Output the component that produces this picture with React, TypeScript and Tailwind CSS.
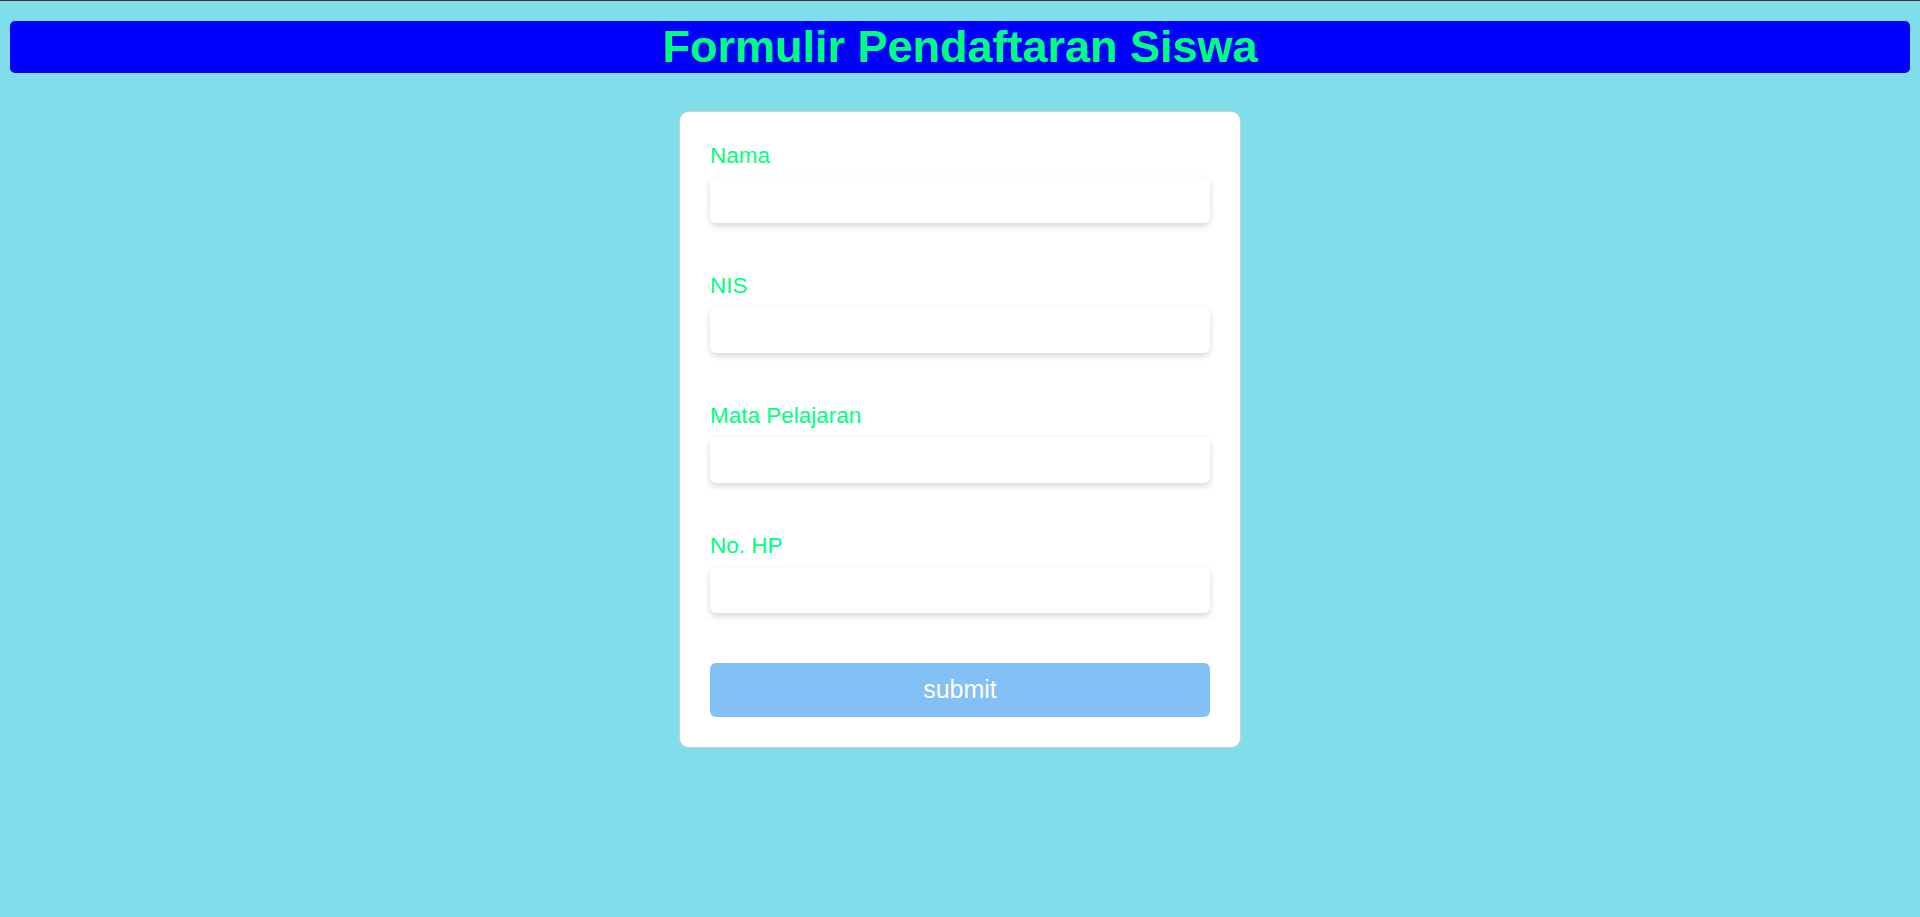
import React, { useState } from 'react';

interface FieldProps {
  label: string;
  name: string;
  value: string;
  onChange: (name: string, value: string) => void;
}

const Field: React.FC<FieldProps> = ({ label, name, value, onChange }) => {
  return (
    <div className="mb-[50px]">
      <label htmlFor={name} className="block text-[22.5px] leading-[25px] text-[#00ff7f] mb-[9px]">
        {label}
      </label>
      <input
        id={name}
        type="text"
        value={value}
        onChange={(e) => onChange(name, e.target.value)}
        className="block w-full h-[46px] px-3 rounded-[6px] bg-white text-[18px] text-gray-800 outline-none shadow-[0_3px_6px_rgba(0,0,0,0.16)]"
      />
    </div>
  );
};

export default function App() {
  const [form, setForm] = useState({ nama: '', nis: '', mapel: '', hp: '' });

  const handleChange = (name: string, value: string) => {
    setForm((prev) => ({ ...prev, [name]: value }));
  };

  return (
    <div className="min-h-[917px] bg-[#80deea] font-['Liberation_Sans',Arial,sans-serif]">
      <div className="h-px bg-[#333]" />
      <div className="px-[10px] pt-[20px]">
        {/* judul */}
        <h1 className="bg-[#0000ff] rounded-[5px] text-center text-[45px] leading-[52px] font-bold text-[#00ff7f]">
          Formulir Pendaftaran Siswa
        </h1>

        {/* form */}
        <div className="flex justify-center mt-[38px]">
          <form
            onSubmit={(e) => e.preventDefault()}
            className="w-[562px] bg-white border border-[#d0d0d0] rounded-[10px] px-[30px] pt-[31px] pb-[30px]"
          >
            <Field label="Nama" name="nama" value={form.nama} onChange={handleChange} />
            <Field label="NIS" name="nis" value={form.nis} onChange={handleChange} />
            <Field label="Mata Pelajaran" name="mapel" value={form.mapel} onChange={handleChange} />
            <Field label="No. HP" name="hp" value={form.hp} onChange={handleChange} />

            <button
              type="submit"
              className="block w-full h-[54px] mt-[1px] rounded-[6px] bg-[#83c0f5] text-white text-[25px]"
            >
              submit
            </button>
          </form>
        </div>
      </div>
    </div>
  );
}
